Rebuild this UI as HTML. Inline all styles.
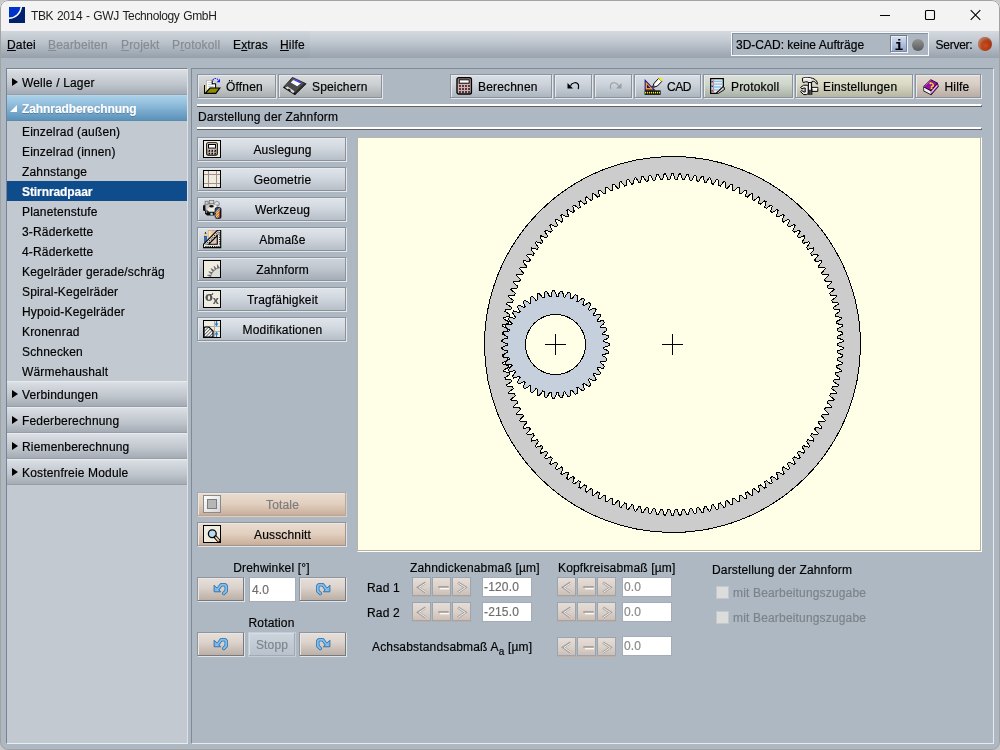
<!DOCTYPE html>
<html lang="de">
<head>
<meta charset="utf-8">
<title>TBK 2014 - GWJ Technology GmbH</title>
<style>
*{box-sizing:border-box;margin:0;padding:0}
html,body{width:1000px;height:750px;overflow:hidden;background:#c9c9c9}
body{font-family:"Liberation Sans",sans-serif;font-size:12px;color:#000;position:relative;line-height:14px;letter-spacing:.17px;-webkit-text-stroke:.18px}
.abs{position:absolute}
#win{position:absolute;left:0;top:0;width:1000px;height:750px;background:#aeb8c3;border-radius:8px;overflow:hidden}
#frame{left:0;top:0;width:1000px;height:750px;border:1px solid #a2a2a2;border-radius:8px;pointer-events:none}
#win>*{position:absolute}
#win{will-change:transform}
#title{left:0;top:0;width:1000px;height:31px;background:#f3f3f3}
#title .t{position:absolute;left:31px;top:9px;font-size:12px;line-height:14px;color:#1c1c1c;letter-spacing:-.37px;word-spacing:.8px;-webkit-text-stroke:0;white-space:nowrap}
#menubar{left:0;top:31px;width:1000px;height:27px;background:linear-gradient(#d5dae0 0%,#c3cad2 35%,#a9b2bc 75%,#99a3ad 100%)}
.mi{position:absolute;top:7px;white-space:nowrap;line-height:14px}
.mi.dis{color:#868b90}
.mi u{text-decoration:underline;text-underline-offset:1px}
/* panels */
#left{left:6px;top:68px;width:182px;height:676px;background:#c2c9d1;border-left:1px solid #79848e;border-top:1px solid #79848e;border-bottom:1px solid #e9edf0;border-right:1px solid #dde2e7}
#right{left:191px;top:68px;width:803px;height:676px;border-left:1px solid #7f8a94;border-top:1px solid #7f8a94;border-bottom:1px solid #e6eaee;border-right:1px solid #e6eaee}
.hdr{position:absolute;left:7px;width:180px;height:26px;background:linear-gradient(#dbe0e5 0,#d3d8de 15%,#bfc5cc 60%,#a5abb4 100%);border-bottom:1px solid #979ea7;border-top:1px solid #e9ecef}
.hdr span{position:absolute;left:15px;top:6px;line-height:14px;white-space:nowrap}
.hdr i{position:absolute;left:5px;top:8px;width:0;height:0;border-left:6px solid #000;border-top:4.5px solid transparent;border-bottom:4.5px solid transparent}
.hdr.open{background:linear-gradient(#a9d0e8 0,#94c0de 30%,#6fa2c7 75%,#5d92b8 100%);border-top:1px solid #b4d6ea;border-bottom:1px solid #5a8cb0}
.hdr.open span{color:#fff;font-weight:bold;letter-spacing:-.09px;text-shadow:0 1px 0 rgba(60,90,120,.5)}
.hdr.open i{border:0;left:3px;top:9px;border-bottom:7px solid #fff;border-left:7px solid transparent}
.it{position:absolute;left:7px;width:180px;height:20px;padding-left:15px;line-height:20px;padding-top:1px;white-space:nowrap}
.it.sel{background:#0f4c8b;color:#fff;font-weight:bold;letter-spacing:-.08px}
/* buttons */
.btn{position:absolute;height:25px;border:1px solid;border-color:#8c959e #e3e7eb #e3e7eb #8c959e;background:linear-gradient(#dfe4e9 0,#d3d9e0 40%,#b4bcc6 100%);box-shadow:inset -1px -1px 0 #8a9199, inset 1px 1px 0 #e8ebee;white-space:nowrap}
.btn .lb{position:absolute;top:5px;line-height:14px}
.btn.grey{background:linear-gradient(#d9dbdd 0,#cdd0d2 40%,#a9acaf 100%)}
.btn.blue{background:linear-gradient(#d9dfe6 0,#ccd3db 40%,#aab3bd 100%)}
.btn.green{background:linear-gradient(#dbe1d8 0,#cfd6cc 40%,#a6aea3 100%)}
.btn.yellow{background:linear-gradient(#e4e4d2 0,#d9d9c5 40%,#b3b39f 100%)}
.btn.pink{background:linear-gradient(#e2dad3 0,#d7cdc5 40%,#b6aaa1 100%)}
.btn.tan{background:linear-gradient(#e9dccf 0,#e2d0c0 45%,#ccb29f 90%,#bda592 100%);border-color:#8c959e #dfe3e8 #dfe3e8 #8c959e;box-shadow:inset -1px -1px 0 #a3958b, inset 1px 1px 0 #f0e8e1}
.btn.tan.dis{border-color:#a1aab3 #d5d0cc #e6ccb6 #a1aab3;box-shadow:inset -1px -1px 0 #b8a89c, inset 1px 1px 0 #eee5dd}
.btn.tan2{height:25px;background:linear-gradient(#e6dfd9 0,#dcd3cc 40%,#b9aca3 100%);border-color:#8e979f #e0e4e8 #e0e4e8 #8e979f;box-shadow:inset -1px -1px 0 #747a80, inset 1px 1px 0 #ebe6e1}
.side{height:25px}
.side .lb{left:21px;right:0;text-align:center}
.btn.cur{background:linear-gradient(#cdd3da 0,#c2c9d1 40%,#a2aab4 100%)}
.ic{position:absolute;left:5px;top:2px;width:18px;height:18px;border:1px solid #000;background:#efece0;overflow:hidden}
.sep{position:absolute;left:197px;width:785px;height:3px;border-top:2px solid #fff;border-bottom:1px solid #5f6368;border-right:1px solid #5f6368}
.inp{position:absolute;height:20px;background:#fff;border:1px solid #a4adb6;color:#6e6e6e;padding-left:1px;line-height:19px;white-space:nowrap}
.sp{position:absolute;width:19px;height:19px;background:linear-gradient(#e6ddd6 0,#dcd2ca 50%,#cdbfb5 100%);border:1px solid #9ba5af}
.sp svg{position:absolute;left:0;top:0}
.lbl{position:absolute;white-space:nowrap;line-height:14px}
.cb{position:absolute;width:13px;height:13px;background:#dcdcdc;border:1px solid #c3c8cd}
.g{color:#7c8288}
</style>
</head>
<body>
<div id="win">
<!-- TITLE -->
<div id="title">
 <svg class="abs" style="left:9px;top:7px" width="16" height="16" viewBox="0 0 16 16"><rect width="16" height="16" fill="#00216f"/><path d="M0 0H12.5A13 13 0 0 1 0 11.5Z" fill="#0033cc"/><path d="M12.3 0A12.6 12.6 0 0 1 0 11.3" fill="none" stroke="#fff" stroke-width="1.500"/></svg>
 <div class="t">TBK 2014 - GWJ Technology GmbH</div>
 <svg class="abs" style="left:870px;top:0px" width="128" height="30" viewBox="0 0 128 30"><g fill="none" stroke="#000" stroke-width="1.100"><path d="M10 15.5H20"/><rect x="55.5" y="10.5" width="9" height="9" rx="1"/><path d="M100.700 10.200L110.300 19.800M110.300 10.200L100.700 19.800"/></g></svg>
</div>
<!-- MENU -->
<div id="menubar">
 <div class="abs" style="left:0;top:0;width:310px;height:27px;background:rgba(20,30,60,.02)"></div>
 <div class="mi" style="left:7px"><u>D</u>atei</div>
 <div class="mi dis" style="left:48px"><u>B</u>earbeiten</div>
 <div class="mi dis" style="left:121px"><u>P</u>rojekt</div>
 <div class="mi dis" style="left:172px">P<u>r</u>otokoll</div>
 <div class="mi" style="left:233px">E<u>x</u>tras</div>
 <div class="mi" style="left:280px"><u>H</u>ilfe</div>
 <div class="abs" style="left:731px;top:1px;width:198px;height:24px;border:1px solid #f7f9fa;background:#adb7c2;box-shadow:inset 1px 1px 0 #8792a0"></div>
 <div class="lbl" style="left:736px;top:7px;letter-spacing:0">3D-CAD: keine Aufträge</div>
 <div class="abs" style="left:890px;top:4px;width:18px;height:18px;border:1px solid;border-color:#6f7a87 #f3f5f8 #f3f5f8 #6f7a87;background:linear-gradient(#d6dff0,#b0c0de 50%,#8fa3c9);box-shadow:inset -1px -1px 0 #7a88a6,inset 1px 1px 0 #e8edf6"><span class="abs" style="left:0;width:16px;text-align:center;top:0;font-family:'Liberation Mono',monospace;font-weight:bold;font-size:14px;line-height:15px;top:3px">i</span></div>
 <div class="abs" style="left:912px;top:8px;width:12px;height:12px;border-radius:50%;background:linear-gradient(#929292,#777 50%,#5a5a5a)"></div>
 <div class="lbl" style="left:935.500px;top:7px;letter-spacing:-.25px">Server:</div>
 <div class="abs" style="left:978px;top:6px;width:14px;height:14px;border-radius:50%;background:radial-gradient(circle at 52% 62%,#cf4c1f 0,#b23c13 38%,#8a2c0d 70%,#74260c 100%);box-shadow:inset 2px 2px 3px rgba(235,190,170,.55)"></div>
</div>
<!-- LEFT PANEL -->
<div id="left"></div>
<div class="hdr" style="top:69px"><i></i><span>Welle / Lager</span></div>
<div class="hdr open" style="top:95px"><i></i><span>Zahnradberechnung</span></div>
<div class="it" style="top:121px">Einzelrad (außen)</div>
<div class="it" style="top:141px">Einzelrad (innen)</div>
<div class="it" style="top:161px">Zahnstange</div>
<div class="it sel" style="top:181px">Stirnradpaar</div>
<div class="it" style="top:201px">Planetenstufe</div>
<div class="it" style="top:221px">3-Räderkette</div>
<div class="it" style="top:241px">4-Räderkette</div>
<div class="it" style="top:261px">Kegelräder gerade/schräg</div>
<div class="it" style="top:281px">Spiral-Kegelräder</div>
<div class="it" style="top:301px">Hypoid-Kegelräder</div>
<div class="it" style="top:321px">Kronenrad</div>
<div class="it" style="top:341px">Schnecken</div>
<div class="it" style="top:361px">Wärmehaushalt</div>
<div class="hdr" style="top:381px"><i></i><span>Verbindungen</span></div>
<div class="hdr" style="top:407px"><i></i><span>Federberechnung</span></div>
<div class="hdr" style="top:433px"><i></i><span>Riemenberechnung</span></div>
<div class="hdr" style="top:459px"><i></i><span>Kostenfreie Module</span></div>
<!-- RIGHT PANEL -->
<div id="right"></div>
<!-- TOOLBAR -->
<div class="btn grey" style="left:197px;top:74px;width:80px">
 <svg class="abs" style="left:6px;top:3px" width="17" height="17" viewBox="0 0 17 17">
  <path d="M2.600 2.400H8.200L11.600 5.800V9.800H6L2.600 13.400Z" fill="#fff" stroke="#8a8a8a" stroke-width=".5"/>
  <path d="M4.200 4.500H7.600M4.200 6.500H9.600M4.200 8.500H9.600" stroke="#c4c4c4" stroke-width=".9"/>
  <path d="M8.200 2.400V5.800H11.600" fill="#fff" stroke="#000" stroke-width="1.100"/><path d="M11.600 5.600V9.800" stroke="#000" stroke-width="1"/>
  <rect x="0" y="7" width="1.200" height="9" fill="#000"/><rect x="1.200" y="7.400" width="1.100" height="7.800" fill="#e6df6a"/>
  <path d="M1.200 15.400L6 10H15.800L11.800 15.400Z" fill="#8f8d00" stroke="#000" stroke-width="1.200" stroke-linejoin="miter"/>
  <path d="M8.800 2.200C9.800 -.2 12.800 -.2 14.200 1.800" fill="none" stroke="#2222e6" stroke-width="1.100" stroke-dasharray="1.500 .9"/>
  <path d="M16 .800V4.200H12.600Z" fill="#1414ff"/>
 </svg>
 <span class="lb" style="left:28px">Öffnen</span>
</div>
<div class="btn grey" style="left:278px;top:74px;width:105px">
 <svg class="abs" style="left:4px;top:2px" width="25" height="19" viewBox="0 0 25 19">
  <path d="M9.400 .400L23.200 6.800L12 17.800L.400 10.400Z" fill="#4b4b4b" stroke="#1c1c1c" stroke-width=".8"/>
  <path d="M23 7L12 17.800L10.400 16.800L21.400 6.200Z" fill="#2a2a2a"/>
  <path d="M.400 10.400L12 17.800L12.600 16.400L1.400 9.400Z" fill="#0c0c0c"/>
  <path d="M11 2.200L18.600 5.800L14.200 9.200L7.800 5.600Z" fill="#fff"/>
  <path d="M11 1.800L18.600 5.400L17.600 6.600L10 3Z" fill="#3c3cff"/>
  <path d="M2 10.400L4.600 9.600L11.400 14.200L10.400 16.200Z" fill="#dedede"/>
  <path d="M5.600 11.600L7.800 13L7 14.400L4.800 13Z" fill="#1a1a1a"/>
  <path d="M9 4.600L12 3.400M10 5.600L13.400 4.200" stroke="#ddd" stroke-width=".4"/>
 </svg>
 <span class="lb" style="left:33px">Speichern</span>
</div>
<div class="btn blue" style="left:450px;top:74px;width:103px">
 <svg class="abs" style="left:5px;top:2px" width="17" height="18" viewBox="0 0 17 18">
  <rect x="1" y=".8" width="14.4" height="16.2" rx="1.8" fill="#d9b0b2" stroke="#000" stroke-width="1.4"/>
  <rect x="3.2" y="2.8" width="10" height="3.4" fill="#fff" stroke="#000" stroke-width="1"/>
  <g fill="#000"><rect x="3.2" y="8.2" width="1.600" height="1.600"/><rect x="6.2" y="8.2" width="1.600" height="1.600"/><rect x="9.2" y="8.2" width="1.600" height="1.600"/><rect x="12.2" y="8.2" width="1.600" height="1.600"/><rect x="3.2" y="11.2" width="1.600" height="1.600"/><rect x="6.2" y="11.2" width="1.600" height="1.600"/><rect x="9.2" y="11.2" width="1.600" height="1.600"/><rect x="12.2" y="11.2" width="1.600" height="1.600"/><rect x="3.2" y="14.2" width="1.600" height="1.600"/><rect x="6.2" y="14.2" width="1.600" height="1.600"/><rect x="9.2" y="14.2" width="1.600" height="1.600"/><rect x="12.2" y="14.2" width="1.600" height="1.600"/></g>
 </svg>
 <span class="lb" style="left:27px">Berechnen</span>
</div>
<div class="btn blue" style="left:554px;top:74px;width:39px">
 <svg class="abs" style="left:11px;top:6px" width="16" height="10" viewBox="0 0 16 10"><path d="M1.5 2V7.5H7Z" fill="#000"/><path d="M4.5 4.8C6 1.2 11.4 .6 12.4 3.8C12.9 5.4 12.4 6.8 12.2 8.2" fill="none" stroke="#000" stroke-width="1.2"/></svg>
</div>
<div class="btn blue" style="left:594px;top:74px;width:39px">
 <svg class="abs" style="left:12px;top:6px" width="16" height="10" viewBox="0 0 16 10"><path d="M14.5 2V7.5H9Z" fill="#9b9da0"/><path d="M11.5 4.8C10 1.2 4.6 .6 3.6 3.8C3.1 5.4 3.6 6.8 3.8 8.2" fill="none" stroke="#9b9da0" stroke-width="1.1"/></svg>
</div>
<div class="btn blue" style="left:634px;top:74px;width:68px">
 <svg class="abs" style="left:9px;top:2px" width="19" height="19" viewBox="0 0 19 19">
  <path d="M.6 2V13.4H11.6Z" fill="#10108c"/><path d="M1.6 4.4V12.4H9.4Z" fill="#ff9a1a"/><path d="M3 7.6V11H6.4Z" fill="#10108c"/>
  <rect x=".6" y="13.4" width="16" height="4.4" fill="#000"/><path d="M1 15.6H16" stroke="#f4ec10" stroke-width="1.6" stroke-dasharray="1.2 .8"/>
  <path d="M8.6 9.8L10.2 6.2L14.6 1.4L18 4.2L13.4 9L9.4 10.4Z" fill="#fff" stroke="#000" stroke-width="1"/>
  <path d="M14.2 1.6L17.8 4.4L18.6 2.2L16.4 .4Z" fill="#f4ec10"/><path d="M8.6 10L10 8.2L11 9.2Z" fill="#000"/>
 </svg>
 <span class="lb" style="left:32px;letter-spacing:-.5px">CAD</span>
</div>
<div class="btn green" style="left:703px;top:74px;width:91px">
 <svg class="abs" style="left:6px;top:3px" width="17" height="17" viewBox="0 0 17 17">
  <path d="M.7 .7H13.3V8.6L6.4 15.3H.7Z" fill="#f1eceb" stroke="#000" stroke-width="1.3"/>
  <path d="M3.400 1.200V14.800" stroke="#f06a6a" stroke-width="1.300"/>
  <path d="M1.2 3.4H12.8M1.2 6.2H12.8M1.2 9H11M1.2 11.8H8.6" stroke="#84c2ee" stroke-width="1.300"/>
  <path d="M13 8.8L14.4 9.6V11.6L8.4 15.4L6.6 15.2Z" fill="#c9c9c9" stroke="#000" stroke-width=".9"/>
  <g fill="#000"><rect x="1.6" y="3" width="1" height="1.4"/><rect x="1.6" y="7.6" width="1" height="1.4"/><rect x="1.6" y="12.2" width="1" height="1.4"/></g>
 </svg>
 <span class="lb" style="left:27px">Protokoll</span>
</div>
<div class="btn yellow" style="left:795px;top:74px;width:119px">
 <svg class="abs" style="left:4px;top:2px" width="19" height="19" viewBox="0 0 19 19">
  <path d="M2.4 1.2C6 .2 12 .2 15.4 2.8C17 4.2 17.6 6 17.4 7.2L16.4 6.8C15.6 4.8 14 4 12 4.4L11.6 5.8H8.2L7.6 4.8C6 4.6 4.4 5 3.2 5.6L2.6 4.2Z" fill="#e6e6e6" stroke="#000" stroke-width="1"/>
  <path d="M3.4 1.8C6 1.2 9 1.4 11 2.2" stroke="#fff" stroke-width="1.2" fill="none"/>
  <rect x="8.4" y="5.6" width="3.2" height="8.2" fill="#d8d8d8" stroke="#000" stroke-width="1"/><path d="M9.6 6V13" stroke="#fff" stroke-width="1"/>
  <rect x="7.8" y="12.8" width="4.6" height="5" fill="#222"/><path d="M8.4 14H12M8.4 16H12" stroke="#aaa" stroke-width=".8" stroke-dasharray=".9 .9"/>
  <path d="M12 10.4H17.8V14.4H12Z" fill="#f0f0f0" stroke="#000" stroke-width="1"/><path d="M12.4 11.4H17.4" stroke="#fff" stroke-width="1"/>
  <path d="M.600 10.400L3.600 8.200L7.400 8.200L8.200 9V16.600L6.400 17.600H3.600L.600 14.600L1.800 13.600L4 15H5.200V11H4L1.800 11.800Z" fill="#ececec" stroke="#000" stroke-width="1"/>
 </svg>
 <span class="lb" style="left:27px">Einstellungen</span>
</div>
<div class="btn pink" style="left:915px;top:74px;width:67px">
 <svg class="abs" style="left:7px;top:4px" width="17" height="17" viewBox="0 0 17 17">
  <path d="M7.8 .3L14.7 3.7L15.8 7.4L8.2 16.2L.5 12.2L.3 7.6Z" fill="#000"/>
  <path d="M.9 8.6L7.8 12.2V15.2L1.2 11.8Z" fill="#f2f2f2"/>
  <path d="M7.8 12.2L14.4 4.6L15.2 7.2L8.3 15.4Z" fill="#a010b0"/><path d="M8.2 12.6L14.2 5.8L14.6 7L8.4 14.2Z" fill="#dcdcdc"/>
  <path d="M7.8 .9L14.1 3.9L7.7 11.3L.9 7.7Z" fill="#9a0fa8"/>
  <path d="M1.6 7.4L7.6 1.4" stroke="#d9a6e0" stroke-width=".9" stroke-dasharray="1 .8"/>
 </svg>
 <span class="abs" style="left:13px;top:6px;font-weight:bold;font-size:9px;line-height:10px;color:#f6ea16;transform:skewY(25deg)">?</span>
 <span class="lb" style="left:28.500px">Hilfe</span>
</div>
<div class="sep" style="top:104px"></div>
<div class="lbl" style="left:198px;top:110px">Darstellung der Zahnform</div>
<div class="sep" style="top:127px"></div>

<!-- SIDE BUTTONS -->
<div class="btn side" style="left:197px;top:137px;width:150px"><div class="ic">
 <svg width="16" height="16" viewBox="0 0 16 16"><rect x="2.700" y="1.700" width="10.600" height="12.600" rx="1.500" fill="#cfbfb1" stroke="#000" stroke-width="1.100"/><rect x="3.500" y="2.500" width="9" height="5.500" fill="#e6ded6"/><rect x="4.500" y="3.500" width="7" height="3.600" fill="#fff" stroke="#000" stroke-width="1"/><g fill="#000"><rect x="4.3" y="8.9" width="1.800" height="1.800"/><rect x="7.2" y="8.9" width="1.800" height="1.800"/><rect x="10.1" y="8.9" width="1.800" height="1.800"/><rect x="4.3" y="11.7" width="1.800" height="1.800"/><rect x="7.2" y="11.7" width="1.800" height="1.800"/><rect x="10.1" y="11.7" width="1.800" height="1.800"/></g><rect x="4.3" y="8.9" width=".7" height=".7" fill="#fff"/><rect x="7.2" y="8.9" width=".7" height=".7" fill="#fff"/><rect x="10.1" y="8.9" width=".7" height=".7" fill="#fff"/><rect x="4.3" y="11.7" width=".7" height=".7" fill="#fff"/><rect x="7.2" y="11.7" width=".7" height=".7" fill="#fff"/><rect x="10.1" y="11.7" width=".7" height=".7" fill="#fff"/></svg>
</div><span class="lb">Auslegung</span></div>
<div class="btn side" style="left:197px;top:167px;width:150px"><div class="ic">
 <svg width="16" height="16" viewBox="0 0 16 16"><path d="M4.5 0V16M12.5 0V16M0 3.5H16M0 12.5H16" stroke="#a58e92" stroke-width="1"/></svg>
</div><span class="lb">Geometrie</span></div>
<div class="btn side" style="left:197px;top:197px;width:150px">
 <svg class="abs" style="left:5px;top:2px" width="19" height="19" viewBox="0 0 19 19">
  <path d="M.500 5.400L3 3.200H12L15.400 6L9 10.400H3Z" fill="#c6c6c6" stroke="#777" stroke-width=".6"/>
  <rect x="2.100" y="1.200" width="3" height="3" fill="#d2d2d2" stroke="#666" stroke-width=".7"/>
  <rect x="6.300" y=".3" width="4.500" height="3.500" fill="#d6d6d6" stroke="#666" stroke-width=".7"/>
  <path d="M11 3.600L13.600 1L16.200 2.600V5.200H12Z" fill="#d6e2e8" stroke="#667" stroke-width=".7"/>
  <path d="M0 5.500L2.400 5V11.200L0 10.500Z" fill="#111"/>
  <path d="M2 10.600L11.600 11.400V15.600H4L2 13.600Z" fill="#0c0c0c"/>
  <path d="M3.400 10.200L9 4.600L13.200 5L14.200 8.400L10 12.200H6Z" fill="#f0ebdf"/>
  <path d="M3.600 10.200L6 12.200H10" fill="none" stroke="#222" stroke-width=".9"/>
  <ellipse cx="8.500" cy="6.300" rx="2.300" ry="1.200" fill="#111"/>
  <rect x="7.500" y="13" width="2.200" height="2" fill="#a8dcec"/><rect x="2.800" y="11.400" width="1.300" height="1.300" fill="#b9c6ee"/>
  <rect x="12.200" y="7.600" width="5.800" height="10.800" rx="1.500" fill="#1d49b2" stroke="#0a0a0a" stroke-width=".8"/>
  <path d="M12.600 12.800L16.600 8.400M12.600 16L17 11.400M13.800 18L17 14.800" stroke="#f2a21c" stroke-width="1.300"/><path d="M12.600 14.400L16.800 10M12.600 17.400L17 13" stroke="#f6f0d8" stroke-width=".8"/>
  <path d="M17.400 10V18" stroke="#111" stroke-width="1.200"/><path d="M16.600 12V17.600" stroke="#d02a10" stroke-width=".9"/>
 </svg><span class="lb">Werkzeug</span></div>
<div class="btn side" style="left:197px;top:227px;width:150px">
 <svg class="abs" style="left:5px;top:2px" width="19" height="19" viewBox="0 0 19 19">
  <rect x="5.200" y=".4" width="7.800" height="13.800" fill="#fbf3e2" stroke="#cf9d9d" stroke-width=".9"/>
  <path d="M8.200 2H12.200M8.200 4H12.200M8.200 6H12.200M8.200 8H12.200M8.200 10H12.200M8.200 12H12.200" stroke="#b46a44" stroke-width=".7"/>
  <path d="M7.200 .8V14" stroke="#f8d84e" stroke-width="1.100"/>
  <rect x="1.500" y="6" width="2" height="6.400" fill="#1a6ad2" stroke="#0e2a50" stroke-width=".5"/><rect x="1.500" y="3.800" width="2" height="2.200" fill="#f4d262"/><path d="M1.500 3.800L2.500 1.400L3.500 3.800Z" fill="#222"/>
  <path fill-rule="evenodd" d="M.4 14.300L14.400 .3H17.700V17.600H.4ZM5.800 14.200H14.300V5.700Z" fill="#e7e7df" stroke="#000" stroke-width="1.100" stroke-linejoin="miter"/>
  <g fill="#000"><rect x="2.4" y="16" width="1" height="1.500"/><rect x="4.6" y="16" width="1" height="1.500"/><rect x="6.8" y="16" width="1" height="1.500"/><rect x="9.0" y="16" width="1" height="1.500"/><rect x="11.2" y="16" width="1" height="1.500"/><rect x="13.4" y="16" width="1" height="1.500"/><rect x="15.4" y="16" width="1" height="1.500"/><rect x="16.200" y="2.4" width="1.500" height="1"/><rect x="16.200" y="4.6" width="1.500" height="1"/><rect x="16.200" y="6.8" width="1.500" height="1"/><rect x="16.200" y="9.0" width="1.500" height="1"/><rect x="16.200" y="11.2" width="1.500" height="1"/><rect x="16.200" y="13.4" width="1.500" height="1"/><rect x="2.6" y="13.6" width="1" height="1"/><rect x="4.3" y="11.9" width="1" height="1"/><rect x="6.0" y="10.2" width="1" height="1"/><rect x="7.7" y="8.5" width="1" height="1"/><rect x="9.4" y="6.8" width="1" height="1"/><rect x="11.1" y="5.1" width="1" height="1"/><rect x="12.8" y="3.4" width="1" height="1"/><rect x="14.5" y="1.7" width="1" height="1"/><rect x="4.4" y="13.8" width="1" height="1"/><rect x="6.1" y="12.1" width="1" height="1"/><rect x="7.8" y="10.4" width="1" height="1"/><rect x="9.5" y="8.7" width="1" height="1"/><rect x="11.2" y="7.0" width="1" height="1"/><rect x="12.9" y="5.3" width="1" height="1"/><rect x="14.6" y="3.6" width="1" height="1"/></g>
 </svg><span class="lb">Abmaße</span></div>
<div class="btn side cur" style="left:197px;top:257px;width:150px"><div class="ic">
 <svg width="16" height="16" viewBox="0 0 16 16"><path d="M16 16L6.4 19.0 L2.9 18.3 L2.9 17.5 L6.3 16.7 L6.4 16.0 L3.2 14.5 L3.4 13.7 L6.9 13.8 L7.2 13.2 L4.5 10.9 L4.9 10.2 L8.2 11.2 L8.6 10.7 L6.6 7.8 L7.2 7.2 L10.2 9.0 L10.7 8.6 L9.5 5.3 L10.2 4.9 L12.6 7.4 L13.2 7.2 L12.9 3.6 L13.7 3.4 L15.4 6.5 L16.0 6.4 L16.7 2.9 L17.5 2.9 L18.3 6.3 L19.0 6.4 L20.5 3.2 L21.3 3.4 L21.2 6.9 L16 16Z" fill="#6f6f6f"/><circle cx="17.500" cy="17.500" r="10.600" fill="#dcdcd8"/></svg>
</div><span class="lb">Zahnform</span></div>
<div class="btn side" style="left:197px;top:287px;width:150px"><div class="ic">
 <span class="abs" style="left:1px;top:-2px;font-family:'Liberation Serif',serif;font-size:15px;line-height:15px;color:#555;font-weight:bold">σ</span><span class="abs" style="left:9px;top:5px;font-family:'Liberation Sans',sans-serif;font-size:10px;line-height:10px;color:#555;font-weight:bold">x</span>
</div><span class="lb">Tragfähigkeit</span></div>
<div class="btn side" style="left:197px;top:317px;width:150px"><div class="ic">
 <svg width="16" height="16" viewBox="0 0 16 16"><defs><pattern id="hat" width="2.4" height="2.4" patternUnits="userSpaceOnUse" patternTransform="rotate(45)"><rect width="2.4" height="2.4" fill="#eee"/><path d="M0 0V2.4" stroke="#333" stroke-width="1.2"/></pattern></defs>
 <path d="M0 5.5H16M0 10.5H16" stroke="#b7aea6" stroke-width="1"/><path d="M10.5 0V16" stroke="#b7aea6" stroke-width="1"/>
 <path d="M0 16V7.6C0 6.6 .8 6 1.8 6H5L9 10V16Z" fill="url(#hat)" stroke="#000" stroke-width="1.2"/>
 <path d="M12.5 0V4M12.5 16V12" stroke="#1f7fd6" stroke-width="1.2"/><path d="M10.6 2.6H14.4L12.5 5.4ZM10.6 13.4H14.4L12.5 10.6Z" fill="#1f7fd6"/></svg>
</div><span class="lb">Modifikationen</span></div>
<!-- Totale / Ausschnitt -->
<div class="btn side tan dis" style="left:197px;top:492px;width:150px"><div class="ic" style="border-color:#8a8a8a;background:linear-gradient(135deg,#ffffff,#d6d6d6)"><div class="abs" style="left:3px;top:3px;width:10px;height:10px;background:#b6b6b6;border:1px solid #7c7c7c"></div></div><span class="lb" style="color:#7d7d7d">Totale</span></div>
<div class="btn side tan" style="left:197px;top:522px;width:150px"><div class="ic">
 <svg width="16" height="16" viewBox="0 0 16 16"><circle cx="8.300" cy="7.800" r="3.900" fill="#b9dcf4" stroke="#000" stroke-width="1.300"/><path d="M11.400 11L14.800 14.800" stroke="#000" stroke-width="3.400" stroke-linecap="round"/><path d="M11.800 11.400L14.600 14.600" stroke="#f0c090" stroke-width="1.700" stroke-linecap="round"/><path d="M12.200 12.600L13.200 11.800M13.400 13.800L14.400 13" stroke="#fff" stroke-width=".6"/></svg>
</div><span class="lb">Ausschnitt</span></div>
<!-- CANVAS -->
<div class="abs" style="left:357px;top:137px;width:625px;height:415px;background:#ffffe7;border-top:1px solid #b4b6ae;border-left:1px solid #b4b6ae;border-right:1px solid #fff;border-bottom:1px solid #fff;box-shadow:inset -1px -1px 0 #b5b19a"></div>
<svg class="abs" style="left:358px;top:138px" width="623" height="413" viewBox="0 0 623 413" shape-rendering="crispEdges">
 <path fill="#cccccc" fill-rule="evenodd" stroke="#000" stroke-width="1" d="M502.500 206.500A188 188 0 1 0 126.500 206.500A188 188 0 1 0 502.500 206.500Z M149.10 205.49 L148.22 205.19 L147.34 204.88 L146.46 204.56 L145.58 204.21 L144.70 203.85 L143.83 203.48 L143.86 201.97 L144.75 201.63 L145.65 201.31 L146.54 201.01 L147.43 200.72 L148.33 200.45 L149.22 200.19 L149.31 198.17 L148.44 197.84 L147.58 197.49 L146.71 197.13 L145.85 196.74 L144.99 196.35 L144.13 195.93 L144.23 194.42 L145.13 194.13 L146.04 193.85 L146.95 193.58 L147.85 193.34 L148.76 193.10 L149.66 192.89 L149.84 190.87 L148.99 190.50 L148.14 190.12 L147.29 189.71 L146.45 189.29 L145.60 188.86 L144.76 188.41 L144.93 186.90 L145.85 186.65 L146.77 186.41 L147.68 186.19 L148.60 185.98 L149.51 185.79 L150.42 185.61 L150.69 183.61 L149.86 183.20 L149.03 182.77 L148.20 182.33 L147.37 181.88 L146.55 181.40 L145.73 180.92 L145.96 179.42 L146.89 179.21 L147.82 179.01 L148.74 178.83 L149.67 178.66 L150.59 178.51 L151.51 178.37 L151.87 176.38 L151.05 175.94 L150.24 175.48 L149.43 175.00 L148.62 174.51 L147.82 174.00 L147.02 173.48 L147.32 171.99 L148.26 171.82 L149.20 171.66 L150.13 171.52 L151.06 171.40 L151.99 171.29 L152.91 171.19 L153.36 169.22 L152.56 168.74 L151.77 168.24 L150.98 167.73 L150.20 167.20 L149.42 166.66 L148.65 166.10 L149.01 164.63 L149.96 164.50 L150.90 164.39 L151.84 164.29 L152.77 164.20 L153.70 164.13 L154.63 164.08 L155.16 162.13 L154.39 161.61 L153.62 161.08 L152.86 160.53 L152.10 159.97 L151.35 159.40 L150.60 158.80 L151.03 157.35 L151.98 157.27 L152.92 157.19 L153.86 157.13 L154.80 157.09 L155.74 157.06 L156.67 157.05 L157.28 155.12 L156.53 154.57 L155.79 154.01 L155.05 153.43 L154.32 152.83 L153.59 152.22 L152.87 151.60 L153.36 150.17 L154.31 150.12 L155.26 150.09 L156.21 150.08 L157.14 150.07 L158.08 150.09 L159.01 150.12 L159.71 148.22 L158.98 147.64 L158.27 147.04 L157.55 146.43 L156.85 145.80 L156.15 145.16 L155.46 144.51 L156.01 143.10 L156.96 143.09 L157.91 143.10 L158.86 143.13 L159.79 143.17 L160.73 143.22 L161.65 143.29 L162.44 141.43 L161.74 140.82 L161.05 140.19 L160.36 139.54 L159.69 138.89 L159.02 138.22 L158.35 137.53 L158.97 136.15 L159.92 136.19 L160.87 136.24 L161.81 136.31 L162.75 136.39 L163.68 136.48 L164.60 136.59 L165.47 134.77 L164.79 134.12 L164.13 133.47 L163.48 132.79 L162.83 132.11 L162.19 131.41 L161.56 130.69 L162.23 129.34 L163.18 129.42 L164.13 129.51 L165.07 129.62 L166.00 129.74 L166.92 129.88 L167.84 130.03 L168.78 128.24 L168.14 127.57 L167.51 126.89 L166.88 126.18 L166.27 125.47 L165.66 124.74 L165.06 124.00 L165.80 122.68 L166.74 122.80 L167.68 122.94 L168.61 123.09 L169.54 123.25 L170.45 123.43 L171.36 123.62 L172.39 121.87 L171.78 121.18 L171.18 120.46 L170.58 119.73 L170.00 118.99 L169.42 118.24 L168.86 117.47 L169.65 116.18 L170.59 116.35 L171.52 116.52 L172.45 116.71 L173.36 116.92 L174.27 117.14 L175.17 117.37 L176.27 115.67 L175.69 114.95 L175.12 114.21 L174.56 113.45 L174.01 112.69 L173.47 111.91 L172.94 111.12 L173.79 109.87 L174.72 110.07 L175.64 110.29 L176.56 110.52 L177.46 110.76 L178.36 111.02 L179.25 111.29 L180.42 109.65 L179.88 108.90 L179.34 108.13 L178.81 107.35 L178.30 106.56 L177.79 105.76 L177.29 104.95 L178.20 103.74 L179.12 103.98 L180.03 104.24 L180.94 104.51 L181.83 104.80 L182.72 105.09 L183.59 105.40 L184.84 103.81 L184.33 103.04 L183.82 102.25 L183.33 101.45 L182.85 100.64 L182.38 99.81 L181.92 98.98 L182.88 97.81 L183.79 98.09 L184.69 98.39 L185.58 98.70 L186.46 99.03 L187.33 99.36 L188.19 99.71 L189.51 98.18 L189.03 97.38 L188.56 96.57 L188.11 95.75 L187.66 94.92 L187.23 94.07 L186.81 93.22 L187.81 92.09 L188.71 92.42 L189.60 92.76 L190.47 93.11 L191.34 93.47 L192.20 93.84 L193.04 94.23 L194.42 92.75 L193.98 91.94 L193.55 91.11 L193.13 90.27 L192.72 89.42 L192.33 88.55 L191.94 87.68 L193.00 86.60 L193.88 86.97 L194.75 87.34 L195.61 87.73 L196.46 88.13 L197.30 88.54 L198.12 88.97 L199.57 87.55 L199.16 86.72 L198.77 85.87 L198.39 85.01 L198.02 84.14 L197.66 83.26 L197.32 82.38 L198.42 81.34 L199.29 81.75 L200.14 82.16 L200.98 82.59 L201.81 83.03 L202.63 83.47 L203.44 83.94 L204.94 82.59 L204.58 81.73 L204.22 80.87 L203.88 80.00 L203.55 79.11 L203.23 78.22 L202.92 77.31 L204.07 76.33 L204.92 76.77 L205.75 77.23 L206.57 77.69 L207.38 78.16 L208.18 78.65 L208.97 79.14 L210.53 77.86 L210.20 76.99 L209.89 76.11 L209.58 75.23 L209.29 74.33 L209.01 73.42 L208.75 72.51 L209.94 71.57 L210.76 72.05 L211.57 72.54 L212.38 73.04 L213.17 73.55 L213.94 74.07 L214.70 74.60 L216.33 73.39 L216.03 72.51 L215.76 71.61 L215.49 70.71 L215.24 69.80 L215.00 68.89 L214.78 67.96 L216.01 67.08 L216.81 67.60 L217.60 68.12 L218.38 68.65 L219.15 69.20 L219.90 69.75 L220.64 70.31 L222.31 69.18 L222.06 68.28 L221.82 67.38 L221.59 66.47 L221.38 65.55 L221.19 64.62 L221.00 63.68 L222.27 62.86 L223.05 63.41 L223.82 63.97 L224.57 64.54 L225.31 65.11 L226.04 65.70 L226.75 66.30 L228.47 65.23 L228.26 64.33 L228.06 63.42 L227.88 62.49 L227.71 61.57 L227.55 60.63 L227.41 59.69 L228.71 58.92 L229.47 59.51 L230.21 60.10 L230.94 60.70 L231.65 61.31 L232.35 61.92 L233.04 62.55 L234.81 61.56 L234.63 60.65 L234.48 59.73 L234.33 58.80 L234.21 57.87 L234.09 56.93 L233.99 55.98 L235.33 55.27 L236.05 55.89 L236.77 56.51 L237.47 57.14 L238.16 57.78 L238.83 58.43 L239.49 59.09 L241.30 58.18 L241.16 57.26 L241.05 56.34 L240.95 55.40 L240.86 54.46 L240.79 53.52 L240.73 52.56 L242.09 51.92 L242.79 52.57 L243.48 53.22 L244.15 53.88 L244.81 54.55 L245.45 55.23 L246.08 55.91 L247.93 55.09 L247.84 54.16 L247.76 53.23 L247.70 52.30 L247.66 51.35 L247.62 50.41 L247.61 49.45 L249.00 48.87 L249.67 49.54 L250.33 50.23 L250.97 50.92 L251.60 51.62 L252.21 52.32 L252.81 53.04 L254.69 52.29 L254.64 51.36 L254.61 50.43 L254.59 49.49 L254.58 48.55 L254.59 47.60 L254.62 46.65 L256.04 46.12 L256.68 46.83 L257.30 47.54 L257.92 48.26 L258.51 48.99 L259.09 49.72 L259.66 50.46 L261.57 49.80 L261.56 48.87 L261.57 47.93 L261.59 47.00 L261.63 46.05 L261.68 45.11 L261.75 44.15 L263.19 43.69 L263.80 44.43 L264.39 45.17 L264.97 45.91 L265.53 46.67 L266.08 47.42 L266.61 48.18 L268.55 47.61 L268.59 46.68 L268.63 45.75 L268.70 44.81 L268.78 43.87 L268.87 42.93 L268.98 41.98 L270.44 41.58 L271.02 42.34 L271.58 43.11 L272.12 43.88 L272.65 44.66 L273.17 45.44 L273.66 46.22 L275.63 45.73 L275.70 44.81 L275.79 43.88 L275.89 42.94 L276.02 42.01 L276.15 41.07 L276.30 40.13 L277.78 39.80 L278.32 40.58 L278.85 41.37 L279.36 42.17 L279.85 42.96 L280.33 43.77 L280.79 44.57 L282.78 44.17 L282.89 43.25 L283.02 42.32 L283.17 41.40 L283.33 40.47 L283.51 39.54 L283.70 38.60 L285.19 38.34 L285.69 39.14 L286.18 39.96 L286.66 40.77 L287.12 41.59 L287.56 42.41 L287.99 43.24 L289.99 42.93 L290.14 42.01 L290.31 41.09 L290.50 40.17 L290.70 39.25 L290.92 38.33 L291.16 37.40 L292.66 37.20 L293.13 38.03 L293.58 38.87 L294.02 39.70 L294.44 40.54 L294.85 41.38 L295.24 42.23 L297.25 42.00 L297.44 41.09 L297.65 40.18 L297.88 39.27 L298.13 38.36 L298.39 37.45 L298.66 36.54 L300.17 36.40 L300.60 37.25 L301.01 38.11 L301.42 38.96 L301.80 39.82 L302.17 40.67 L302.52 41.53 L304.54 41.40 L304.77 40.50 L305.03 39.60 L305.29 38.70 L305.58 37.80 L305.88 36.90 L306.19 36.00 L307.70 35.94 L308.10 36.80 L308.48 37.67 L308.84 38.55 L309.19 39.42 L309.52 40.29 L309.83 41.17 L311.85 41.12 L312.13 40.23 L312.42 39.35 L312.73 38.46 L313.05 37.57 L313.39 36.69 L313.74 35.80 L315.26 35.80 L315.61 36.69 L315.95 37.57 L316.27 38.46 L316.58 39.35 L316.87 40.23 L317.15 41.12 L319.17 41.17 L319.48 40.29 L319.81 39.42 L320.16 38.55 L320.52 37.67 L320.90 36.80 L321.30 35.94 L322.81 36.00 L323.12 36.90 L323.42 37.80 L323.71 38.70 L323.97 39.60 L324.23 40.50 L324.46 41.40 L326.48 41.53 L326.83 40.67 L327.20 39.82 L327.58 38.96 L327.99 38.11 L328.40 37.25 L328.83 36.40 L330.34 36.54 L330.61 37.45 L330.87 38.36 L331.12 39.27 L331.35 40.18 L331.56 41.09 L331.75 42.00 L333.76 42.23 L334.15 41.38 L334.56 40.54 L334.98 39.70 L335.42 38.87 L335.87 38.03 L336.34 37.20 L337.84 37.40 L338.08 38.33 L338.30 39.25 L338.50 40.17 L338.69 41.09 L338.86 42.01 L339.01 42.93 L341.01 43.24 L341.44 42.41 L341.88 41.59 L342.34 40.77 L342.82 39.96 L343.31 39.14 L343.81 38.34 L345.30 38.60 L345.49 39.54 L345.67 40.47 L345.83 41.40 L345.98 42.32 L346.11 43.25 L346.22 44.17 L348.21 44.57 L348.67 43.77 L349.15 42.96 L349.64 42.17 L350.15 41.37 L350.68 40.58 L351.22 39.80 L352.70 40.13 L352.85 41.07 L352.98 42.01 L353.11 42.94 L353.21 43.88 L353.30 44.81 L353.37 45.73 L355.34 46.22 L355.83 45.44 L356.35 44.66 L356.88 43.88 L357.42 43.11 L357.98 42.34 L358.56 41.58 L360.02 41.98 L360.13 42.93 L360.22 43.87 L360.30 44.81 L360.37 45.75 L360.41 46.68 L360.45 47.61 L362.39 48.18 L362.92 47.42 L363.47 46.67 L364.03 45.91 L364.61 45.17 L365.20 44.43 L365.81 43.69 L367.25 44.15 L367.32 45.11 L367.37 46.05 L367.41 47.00 L367.43 47.93 L367.44 48.87 L367.43 49.80 L369.34 50.46 L369.91 49.72 L370.49 48.99 L371.08 48.26 L371.70 47.54 L372.32 46.83 L372.96 46.12 L374.38 46.65 L374.41 47.60 L374.42 48.55 L374.41 49.49 L374.39 50.43 L374.36 51.36 L374.31 52.29 L376.19 53.04 L376.79 52.32 L377.40 51.62 L378.03 50.92 L378.67 50.23 L379.33 49.54 L380.00 48.87 L381.39 49.45 L381.38 50.41 L381.34 51.35 L381.30 52.30 L381.24 53.23 L381.16 54.16 L381.07 55.09 L382.92 55.91 L383.55 55.23 L384.19 54.55 L384.85 53.88 L385.52 53.22 L386.21 52.57 L386.91 51.92 L388.27 52.56 L388.21 53.52 L388.14 54.46 L388.05 55.40 L387.95 56.34 L387.84 57.26 L387.70 58.18 L389.51 59.09 L390.17 58.43 L390.84 57.78 L391.53 57.14 L392.23 56.51 L392.95 55.89 L393.67 55.27 L395.01 55.98 L394.91 56.93 L394.79 57.87 L394.67 58.80 L394.52 59.73 L394.37 60.65 L394.19 61.56 L395.96 62.55 L396.65 61.92 L397.35 61.31 L398.06 60.70 L398.79 60.10 L399.53 59.51 L400.29 58.92 L401.59 59.69 L401.45 60.63 L401.29 61.57 L401.12 62.49 L400.94 63.42 L400.74 64.33 L400.53 65.23 L402.25 66.30 L402.96 65.70 L403.69 65.11 L404.43 64.54 L405.18 63.97 L405.95 63.41 L406.73 62.86 L408.00 63.68 L407.81 64.62 L407.62 65.55 L407.41 66.47 L407.18 67.38 L406.94 68.28 L406.69 69.18 L408.36 70.31 L409.10 69.75 L409.85 69.20 L410.62 68.65 L411.40 68.12 L412.19 67.60 L412.99 67.08 L414.22 67.96 L414.00 68.89 L413.76 69.80 L413.51 70.71 L413.24 71.61 L412.97 72.51 L412.67 73.39 L414.30 74.60 L415.06 74.07 L415.83 73.55 L416.62 73.04 L417.43 72.54 L418.24 72.05 L419.06 71.57 L420.25 72.51 L419.99 73.42 L419.71 74.33 L419.42 75.23 L419.11 76.11 L418.80 76.99 L418.47 77.86 L420.03 79.14 L420.82 78.65 L421.62 78.16 L422.43 77.69 L423.25 77.23 L424.08 76.77 L424.93 76.33 L426.08 77.31 L425.77 78.22 L425.45 79.11 L425.12 80.00 L424.78 80.87 L424.42 81.73 L424.06 82.59 L425.56 83.94 L426.37 83.47 L427.19 83.03 L428.02 82.59 L428.86 82.16 L429.71 81.75 L430.58 81.34 L431.68 82.38 L431.34 83.26 L430.98 84.14 L430.61 85.01 L430.23 85.87 L429.84 86.72 L429.43 87.55 L430.88 88.97 L431.70 88.54 L432.54 88.13 L433.39 87.73 L434.25 87.34 L435.12 86.97 L436.00 86.60 L437.06 87.68 L436.67 88.55 L436.28 89.42 L435.87 90.27 L435.45 91.11 L435.02 91.94 L434.58 92.75 L435.96 94.23 L436.80 93.84 L437.66 93.47 L438.53 93.11 L439.40 92.76 L440.29 92.42 L441.19 92.09 L442.19 93.22 L441.77 94.07 L441.34 94.92 L440.89 95.75 L440.44 96.57 L439.97 97.38 L439.49 98.18 L440.81 99.71 L441.67 99.36 L442.54 99.03 L443.42 98.70 L444.31 98.39 L445.21 98.09 L446.12 97.81 L447.08 98.98 L446.62 99.81 L446.15 100.64 L445.67 101.45 L445.18 102.25 L444.67 103.04 L444.16 103.81 L445.41 105.40 L446.28 105.09 L447.17 104.80 L448.06 104.51 L448.97 104.24 L449.88 103.98 L450.80 103.74 L451.71 104.95 L451.21 105.76 L450.70 106.56 L450.19 107.35 L449.66 108.13 L449.12 108.90 L448.58 109.65 L449.75 111.29 L450.64 111.02 L451.54 110.76 L452.44 110.52 L453.36 110.29 L454.28 110.07 L455.21 109.87 L456.06 111.12 L455.53 111.91 L454.99 112.69 L454.44 113.45 L453.88 114.21 L453.31 114.95 L452.73 115.67 L453.83 117.37 L454.73 117.14 L455.64 116.92 L456.55 116.71 L457.48 116.52 L458.41 116.35 L459.35 116.18 L460.14 117.47 L459.58 118.24 L459.00 118.99 L458.42 119.73 L457.82 120.46 L457.22 121.18 L456.61 121.87 L457.64 123.62 L458.55 123.43 L459.46 123.25 L460.39 123.09 L461.32 122.94 L462.26 122.80 L463.20 122.68 L463.94 124.00 L463.34 124.74 L462.73 125.47 L462.12 126.18 L461.49 126.89 L460.86 127.57 L460.22 128.24 L461.16 130.03 L462.08 129.88 L463.00 129.74 L463.93 129.62 L464.87 129.51 L465.82 129.42 L466.77 129.34 L467.44 130.69 L466.81 131.41 L466.17 132.11 L465.52 132.79 L464.87 133.47 L464.21 134.12 L463.53 134.77 L464.40 136.59 L465.32 136.48 L466.25 136.39 L467.19 136.31 L468.13 136.24 L469.08 136.19 L470.03 136.15 L470.65 137.53 L469.98 138.22 L469.31 138.89 L468.64 139.54 L467.95 140.19 L467.26 140.82 L466.56 141.43 L467.35 143.29 L468.27 143.22 L469.21 143.17 L470.14 143.13 L471.09 143.10 L472.04 143.09 L472.99 143.10 L473.54 144.51 L472.85 145.16 L472.15 145.80 L471.45 146.43 L470.73 147.04 L470.02 147.64 L469.29 148.22 L469.99 150.12 L470.92 150.09 L471.86 150.07 L472.79 150.08 L473.74 150.09 L474.69 150.12 L475.64 150.17 L476.13 151.60 L475.41 152.22 L474.68 152.83 L473.95 153.43 L473.21 154.01 L472.47 154.57 L471.72 155.12 L472.33 157.05 L473.26 157.06 L474.20 157.09 L475.14 157.13 L476.08 157.19 L477.02 157.27 L477.97 157.35 L478.40 158.80 L477.65 159.40 L476.90 159.97 L476.14 160.53 L475.38 161.08 L474.61 161.61 L473.84 162.13 L474.37 164.08 L475.30 164.13 L476.23 164.20 L477.16 164.29 L478.10 164.39 L479.04 164.50 L479.99 164.63 L480.35 166.10 L479.58 166.66 L478.80 167.20 L478.02 167.73 L477.23 168.24 L476.44 168.74 L475.64 169.22 L476.09 171.19 L477.01 171.29 L477.94 171.40 L478.87 171.52 L479.80 171.66 L480.74 171.82 L481.68 171.99 L481.98 173.48 L481.18 174.00 L480.38 174.51 L479.57 175.00 L478.76 175.48 L477.95 175.94 L477.13 176.38 L477.49 178.37 L478.41 178.51 L479.33 178.66 L480.26 178.83 L481.18 179.01 L482.11 179.21 L483.04 179.42 L483.27 180.92 L482.45 181.40 L481.63 181.88 L480.80 182.33 L479.97 182.77 L479.14 183.20 L478.31 183.61 L478.58 185.61 L479.49 185.79 L480.40 185.98 L481.32 186.19 L482.23 186.41 L483.15 186.65 L484.07 186.90 L484.24 188.41 L483.40 188.86 L482.55 189.29 L481.71 189.71 L480.86 190.12 L480.01 190.50 L479.16 190.87 L479.34 192.89 L480.24 193.10 L481.15 193.34 L482.05 193.58 L482.96 193.85 L483.87 194.13 L484.77 194.42 L484.87 195.93 L484.01 196.35 L483.15 196.74 L482.29 197.13 L481.42 197.49 L480.56 197.84 L479.69 198.17 L479.78 200.19 L480.67 200.45 L481.57 200.72 L482.46 201.01 L483.35 201.31 L484.25 201.63 L485.14 201.97 L485.17 203.48 L484.30 203.85 L483.42 204.21 L482.54 204.56 L481.66 204.88 L480.78 205.19 L479.90 205.49 L479.90 207.51 L480.78 207.81 L481.66 208.12 L482.54 208.44 L483.42 208.79 L484.30 209.15 L485.17 209.52 L485.14 211.03 L484.25 211.37 L483.35 211.69 L482.46 211.99 L481.57 212.28 L480.67 212.55 L479.78 212.81 L479.69 214.83 L480.56 215.16 L481.42 215.51 L482.29 215.87 L483.15 216.26 L484.01 216.65 L484.87 217.07 L484.77 218.58 L483.87 218.87 L482.96 219.15 L482.05 219.42 L481.15 219.66 L480.24 219.90 L479.34 220.11 L479.16 222.13 L480.01 222.50 L480.86 222.88 L481.71 223.29 L482.55 223.71 L483.40 224.14 L484.24 224.59 L484.07 226.10 L483.15 226.35 L482.23 226.59 L481.32 226.81 L480.40 227.02 L479.49 227.21 L478.58 227.39 L478.31 229.39 L479.14 229.80 L479.97 230.23 L480.80 230.67 L481.63 231.12 L482.45 231.60 L483.27 232.08 L483.04 233.58 L482.11 233.79 L481.18 233.99 L480.26 234.17 L479.33 234.34 L478.41 234.49 L477.49 234.63 L477.13 236.62 L477.95 237.06 L478.76 237.52 L479.57 238.00 L480.38 238.49 L481.18 239.00 L481.98 239.52 L481.68 241.01 L480.74 241.18 L479.80 241.34 L478.87 241.48 L477.94 241.60 L477.01 241.71 L476.09 241.81 L475.64 243.78 L476.44 244.26 L477.23 244.76 L478.02 245.27 L478.80 245.80 L479.58 246.34 L480.35 246.90 L479.99 248.37 L479.04 248.50 L478.10 248.61 L477.16 248.71 L476.23 248.80 L475.30 248.87 L474.37 248.92 L473.84 250.87 L474.61 251.39 L475.38 251.92 L476.14 252.47 L476.90 253.03 L477.65 253.60 L478.40 254.20 L477.97 255.65 L477.02 255.73 L476.08 255.81 L475.14 255.87 L474.20 255.91 L473.26 255.94 L472.33 255.95 L471.72 257.88 L472.47 258.43 L473.21 258.99 L473.95 259.57 L474.68 260.17 L475.41 260.78 L476.13 261.40 L475.64 262.83 L474.69 262.88 L473.74 262.91 L472.79 262.92 L471.86 262.93 L470.92 262.91 L469.99 262.88 L469.29 264.78 L470.02 265.36 L470.73 265.96 L471.45 266.57 L472.15 267.20 L472.85 267.84 L473.54 268.49 L472.99 269.90 L472.04 269.91 L471.09 269.90 L470.14 269.87 L469.21 269.83 L468.27 269.78 L467.35 269.71 L466.56 271.57 L467.26 272.18 L467.95 272.81 L468.64 273.46 L469.31 274.11 L469.98 274.78 L470.65 275.47 L470.03 276.85 L469.08 276.81 L468.13 276.76 L467.19 276.69 L466.25 276.61 L465.32 276.52 L464.40 276.41 L463.53 278.23 L464.21 278.88 L464.87 279.53 L465.52 280.21 L466.17 280.89 L466.81 281.59 L467.44 282.31 L466.77 283.66 L465.82 283.58 L464.87 283.49 L463.93 283.38 L463.00 283.26 L462.08 283.12 L461.16 282.97 L460.22 284.76 L460.86 285.43 L461.49 286.11 L462.12 286.82 L462.73 287.53 L463.34 288.26 L463.94 289.00 L463.20 290.32 L462.26 290.20 L461.32 290.06 L460.39 289.91 L459.46 289.75 L458.55 289.57 L457.64 289.38 L456.61 291.13 L457.22 291.82 L457.82 292.54 L458.42 293.27 L459.00 294.01 L459.58 294.76 L460.14 295.53 L459.35 296.82 L458.41 296.65 L457.48 296.48 L456.55 296.29 L455.64 296.08 L454.73 295.86 L453.83 295.63 L452.73 297.33 L453.31 298.05 L453.88 298.79 L454.44 299.55 L454.99 300.31 L455.53 301.09 L456.06 301.88 L455.21 303.13 L454.28 302.93 L453.36 302.71 L452.44 302.48 L451.54 302.24 L450.64 301.98 L449.75 301.71 L448.58 303.35 L449.12 304.10 L449.66 304.87 L450.19 305.65 L450.70 306.44 L451.21 307.24 L451.71 308.05 L450.80 309.26 L449.88 309.02 L448.97 308.76 L448.06 308.49 L447.17 308.20 L446.28 307.91 L445.41 307.60 L444.16 309.19 L444.67 309.96 L445.18 310.75 L445.67 311.55 L446.15 312.36 L446.62 313.19 L447.08 314.02 L446.12 315.19 L445.21 314.91 L444.31 314.61 L443.42 314.30 L442.54 313.97 L441.67 313.64 L440.81 313.29 L439.49 314.82 L439.97 315.62 L440.44 316.43 L440.89 317.25 L441.34 318.08 L441.77 318.93 L442.19 319.78 L441.19 320.91 L440.29 320.58 L439.40 320.24 L438.53 319.89 L437.66 319.53 L436.80 319.16 L435.96 318.77 L434.58 320.25 L435.02 321.06 L435.45 321.89 L435.87 322.73 L436.28 323.58 L436.67 324.45 L437.06 325.32 L436.00 326.40 L435.12 326.03 L434.25 325.66 L433.39 325.27 L432.54 324.87 L431.70 324.46 L430.88 324.03 L429.43 325.45 L429.84 326.28 L430.23 327.13 L430.61 327.99 L430.98 328.86 L431.34 329.74 L431.68 330.62 L430.58 331.66 L429.71 331.25 L428.86 330.84 L428.02 330.41 L427.19 329.97 L426.37 329.53 L425.56 329.06 L424.06 330.41 L424.42 331.27 L424.78 332.13 L425.12 333.00 L425.45 333.89 L425.77 334.78 L426.08 335.69 L424.93 336.67 L424.08 336.23 L423.25 335.77 L422.43 335.31 L421.62 334.84 L420.82 334.35 L420.03 333.86 L418.47 335.14 L418.80 336.01 L419.11 336.89 L419.42 337.77 L419.71 338.67 L419.99 339.58 L420.25 340.49 L419.06 341.43 L418.24 340.95 L417.43 340.46 L416.62 339.96 L415.83 339.45 L415.06 338.93 L414.30 338.40 L412.67 339.61 L412.97 340.49 L413.24 341.39 L413.51 342.29 L413.76 343.20 L414.00 344.11 L414.22 345.04 L412.99 345.92 L412.19 345.40 L411.40 344.88 L410.62 344.35 L409.85 343.80 L409.10 343.25 L408.36 342.69 L406.69 343.82 L406.94 344.72 L407.18 345.62 L407.41 346.53 L407.62 347.45 L407.81 348.38 L408.00 349.32 L406.73 350.14 L405.95 349.59 L405.18 349.03 L404.43 348.46 L403.69 347.89 L402.96 347.30 L402.25 346.70 L400.53 347.77 L400.74 348.67 L400.94 349.58 L401.12 350.51 L401.29 351.43 L401.45 352.37 L401.59 353.31 L400.29 354.08 L399.53 353.49 L398.79 352.90 L398.06 352.30 L397.35 351.69 L396.65 351.08 L395.96 350.45 L394.19 351.44 L394.37 352.35 L394.52 353.27 L394.67 354.20 L394.79 355.13 L394.91 356.07 L395.01 357.02 L393.67 357.73 L392.95 357.11 L392.23 356.49 L391.53 355.86 L390.84 355.22 L390.17 354.57 L389.51 353.91 L387.70 354.82 L387.84 355.74 L387.95 356.66 L388.05 357.60 L388.14 358.54 L388.21 359.48 L388.27 360.44 L386.91 361.08 L386.21 360.43 L385.52 359.78 L384.85 359.12 L384.19 358.45 L383.55 357.77 L382.92 357.09 L381.07 357.91 L381.16 358.84 L381.24 359.77 L381.30 360.70 L381.34 361.65 L381.38 362.59 L381.39 363.55 L380.00 364.13 L379.33 363.46 L378.67 362.77 L378.03 362.08 L377.40 361.38 L376.79 360.68 L376.19 359.96 L374.31 360.71 L374.36 361.64 L374.39 362.57 L374.41 363.51 L374.42 364.45 L374.41 365.40 L374.38 366.35 L372.96 366.88 L372.32 366.17 L371.70 365.46 L371.08 364.74 L370.49 364.01 L369.91 363.28 L369.34 362.54 L367.43 363.20 L367.44 364.13 L367.43 365.07 L367.41 366.00 L367.37 366.95 L367.32 367.89 L367.25 368.85 L365.81 369.31 L365.20 368.57 L364.61 367.83 L364.03 367.09 L363.47 366.33 L362.92 365.58 L362.39 364.82 L360.45 365.39 L360.41 366.32 L360.37 367.25 L360.30 368.19 L360.22 369.13 L360.13 370.07 L360.02 371.02 L358.56 371.42 L357.98 370.66 L357.42 369.89 L356.88 369.12 L356.35 368.34 L355.83 367.56 L355.34 366.78 L353.37 367.27 L353.30 368.19 L353.21 369.12 L353.11 370.06 L352.98 370.99 L352.85 371.93 L352.70 372.87 L351.22 373.20 L350.68 372.42 L350.15 371.63 L349.64 370.83 L349.15 370.04 L348.67 369.23 L348.21 368.43 L346.22 368.83 L346.11 369.75 L345.98 370.68 L345.83 371.60 L345.67 372.53 L345.49 373.46 L345.30 374.40 L343.81 374.66 L343.31 373.86 L342.82 373.04 L342.34 372.23 L341.88 371.41 L341.44 370.59 L341.01 369.76 L339.01 370.07 L338.86 370.99 L338.69 371.91 L338.50 372.83 L338.30 373.75 L338.08 374.67 L337.84 375.60 L336.34 375.80 L335.87 374.97 L335.42 374.13 L334.98 373.30 L334.56 372.46 L334.15 371.62 L333.76 370.77 L331.75 371.00 L331.56 371.91 L331.35 372.82 L331.12 373.73 L330.87 374.64 L330.61 375.55 L330.34 376.46 L328.83 376.60 L328.40 375.75 L327.99 374.89 L327.58 374.04 L327.20 373.18 L326.83 372.33 L326.48 371.47 L324.46 371.60 L324.23 372.50 L323.97 373.40 L323.71 374.30 L323.42 375.20 L323.12 376.10 L322.81 377.00 L321.30 377.06 L320.90 376.20 L320.52 375.33 L320.16 374.45 L319.81 373.58 L319.48 372.71 L319.17 371.83 L317.15 371.88 L316.87 372.77 L316.58 373.65 L316.27 374.54 L315.95 375.43 L315.61 376.31 L315.26 377.20 L313.74 377.20 L313.39 376.31 L313.05 375.43 L312.73 374.54 L312.42 373.65 L312.13 372.77 L311.85 371.88 L309.83 371.83 L309.52 372.71 L309.19 373.58 L308.84 374.45 L308.48 375.33 L308.10 376.20 L307.70 377.06 L306.19 377.00 L305.88 376.10 L305.58 375.20 L305.29 374.30 L305.03 373.40 L304.77 372.50 L304.54 371.60 L302.52 371.47 L302.17 372.33 L301.80 373.18 L301.42 374.04 L301.01 374.89 L300.60 375.75 L300.17 376.60 L298.66 376.46 L298.39 375.55 L298.13 374.64 L297.88 373.73 L297.65 372.82 L297.44 371.91 L297.25 371.00 L295.24 370.77 L294.85 371.62 L294.44 372.46 L294.02 373.30 L293.58 374.13 L293.13 374.97 L292.66 375.80 L291.16 375.60 L290.92 374.67 L290.70 373.75 L290.50 372.83 L290.31 371.91 L290.14 370.99 L289.99 370.07 L287.99 369.76 L287.56 370.59 L287.12 371.41 L286.66 372.23 L286.18 373.04 L285.69 373.86 L285.19 374.66 L283.70 374.40 L283.51 373.46 L283.33 372.53 L283.17 371.60 L283.02 370.68 L282.89 369.75 L282.78 368.83 L280.79 368.43 L280.33 369.23 L279.85 370.04 L279.36 370.83 L278.85 371.63 L278.32 372.42 L277.78 373.20 L276.30 372.87 L276.15 371.93 L276.02 370.99 L275.89 370.06 L275.79 369.12 L275.70 368.19 L275.63 367.27 L273.66 366.78 L273.17 367.56 L272.65 368.34 L272.12 369.12 L271.58 369.89 L271.02 370.66 L270.44 371.42 L268.98 371.02 L268.87 370.07 L268.78 369.13 L268.70 368.19 L268.63 367.25 L268.59 366.32 L268.55 365.39 L266.61 364.82 L266.08 365.58 L265.53 366.33 L264.97 367.09 L264.39 367.83 L263.80 368.57 L263.19 369.31 L261.75 368.85 L261.68 367.89 L261.63 366.95 L261.59 366.00 L261.57 365.07 L261.56 364.13 L261.57 363.20 L259.66 362.54 L259.09 363.28 L258.51 364.01 L257.92 364.74 L257.30 365.46 L256.68 366.17 L256.04 366.88 L254.62 366.35 L254.59 365.40 L254.58 364.45 L254.59 363.51 L254.61 362.57 L254.64 361.64 L254.69 360.71 L252.81 359.96 L252.21 360.68 L251.60 361.38 L250.97 362.08 L250.33 362.77 L249.67 363.46 L249.00 364.13 L247.61 363.55 L247.62 362.59 L247.66 361.65 L247.70 360.70 L247.76 359.77 L247.84 358.84 L247.93 357.91 L246.08 357.09 L245.45 357.77 L244.81 358.45 L244.15 359.12 L243.48 359.78 L242.79 360.43 L242.09 361.08 L240.73 360.44 L240.79 359.48 L240.86 358.54 L240.95 357.60 L241.05 356.66 L241.16 355.74 L241.30 354.82 L239.49 353.91 L238.83 354.57 L238.16 355.22 L237.47 355.86 L236.77 356.49 L236.05 357.11 L235.33 357.73 L233.99 357.02 L234.09 356.07 L234.21 355.13 L234.33 354.20 L234.48 353.27 L234.63 352.35 L234.81 351.44 L233.04 350.45 L232.35 351.08 L231.65 351.69 L230.94 352.30 L230.21 352.90 L229.47 353.49 L228.71 354.08 L227.41 353.31 L227.55 352.37 L227.71 351.43 L227.88 350.51 L228.06 349.58 L228.26 348.67 L228.47 347.77 L226.75 346.70 L226.04 347.30 L225.31 347.89 L224.57 348.46 L223.82 349.03 L223.05 349.59 L222.27 350.14 L221.00 349.32 L221.19 348.38 L221.38 347.45 L221.59 346.53 L221.82 345.62 L222.06 344.72 L222.31 343.82 L220.64 342.69 L219.90 343.25 L219.15 343.80 L218.38 344.35 L217.60 344.88 L216.81 345.40 L216.01 345.92 L214.78 345.04 L215.00 344.11 L215.24 343.20 L215.49 342.29 L215.76 341.39 L216.03 340.49 L216.33 339.61 L214.70 338.40 L213.94 338.93 L213.17 339.45 L212.38 339.96 L211.57 340.46 L210.76 340.95 L209.94 341.43 L208.75 340.49 L209.01 339.58 L209.29 338.67 L209.58 337.77 L209.89 336.89 L210.20 336.01 L210.53 335.14 L208.97 333.86 L208.18 334.35 L207.38 334.84 L206.57 335.31 L205.75 335.77 L204.92 336.23 L204.07 336.67 L202.92 335.69 L203.23 334.78 L203.55 333.89 L203.88 333.00 L204.22 332.13 L204.58 331.27 L204.94 330.41 L203.44 329.06 L202.63 329.53 L201.81 329.97 L200.98 330.41 L200.14 330.84 L199.29 331.25 L198.42 331.66 L197.32 330.62 L197.66 329.74 L198.02 328.86 L198.39 327.99 L198.77 327.13 L199.16 326.28 L199.57 325.45 L198.12 324.03 L197.30 324.46 L196.46 324.87 L195.61 325.27 L194.75 325.66 L193.88 326.03 L193.00 326.40 L191.94 325.32 L192.33 324.45 L192.72 323.58 L193.13 322.73 L193.55 321.89 L193.98 321.06 L194.42 320.25 L193.04 318.77 L192.20 319.16 L191.34 319.53 L190.47 319.89 L189.60 320.24 L188.71 320.58 L187.81 320.91 L186.81 319.78 L187.23 318.93 L187.66 318.08 L188.11 317.25 L188.56 316.43 L189.03 315.62 L189.51 314.82 L188.19 313.29 L187.33 313.64 L186.46 313.97 L185.58 314.30 L184.69 314.61 L183.79 314.91 L182.88 315.19 L181.92 314.02 L182.38 313.19 L182.85 312.36 L183.33 311.55 L183.82 310.75 L184.33 309.96 L184.84 309.19 L183.59 307.60 L182.72 307.91 L181.83 308.20 L180.94 308.49 L180.03 308.76 L179.12 309.02 L178.20 309.26 L177.29 308.05 L177.79 307.24 L178.30 306.44 L178.81 305.65 L179.34 304.87 L179.88 304.10 L180.42 303.35 L179.25 301.71 L178.36 301.98 L177.46 302.24 L176.56 302.48 L175.64 302.71 L174.72 302.93 L173.79 303.13 L172.94 301.88 L173.47 301.09 L174.01 300.31 L174.56 299.55 L175.12 298.79 L175.69 298.05 L176.27 297.33 L175.17 295.63 L174.27 295.86 L173.36 296.08 L172.45 296.29 L171.52 296.48 L170.59 296.65 L169.65 296.82 L168.86 295.53 L169.42 294.76 L170.00 294.01 L170.58 293.27 L171.18 292.54 L171.78 291.82 L172.39 291.13 L171.36 289.38 L170.45 289.57 L169.54 289.75 L168.61 289.91 L167.68 290.06 L166.74 290.20 L165.80 290.32 L165.06 289.00 L165.66 288.26 L166.27 287.53 L166.88 286.82 L167.51 286.11 L168.14 285.43 L168.78 284.76 L167.84 282.97 L166.92 283.12 L166.00 283.26 L165.07 283.38 L164.13 283.49 L163.18 283.58 L162.23 283.66 L161.56 282.31 L162.19 281.59 L162.83 280.89 L163.48 280.21 L164.13 279.53 L164.79 278.88 L165.47 278.23 L164.60 276.41 L163.68 276.52 L162.75 276.61 L161.81 276.69 L160.87 276.76 L159.92 276.81 L158.97 276.85 L158.35 275.47 L159.02 274.78 L159.69 274.11 L160.36 273.46 L161.05 272.81 L161.74 272.18 L162.44 271.57 L161.65 269.71 L160.73 269.78 L159.79 269.83 L158.86 269.87 L157.91 269.90 L156.96 269.91 L156.01 269.90 L155.46 268.49 L156.15 267.84 L156.85 267.20 L157.55 266.57 L158.27 265.96 L158.98 265.36 L159.71 264.78 L159.01 262.88 L158.08 262.91 L157.14 262.93 L156.21 262.92 L155.26 262.91 L154.31 262.88 L153.36 262.83 L152.87 261.40 L153.59 260.78 L154.32 260.17 L155.05 259.57 L155.79 258.99 L156.53 258.43 L157.28 257.88 L156.67 255.95 L155.74 255.94 L154.80 255.91 L153.86 255.87 L152.92 255.81 L151.98 255.73 L151.03 255.65 L150.60 254.20 L151.35 253.60 L152.10 253.03 L152.86 252.47 L153.62 251.92 L154.39 251.39 L155.16 250.87 L154.63 248.92 L153.70 248.87 L152.77 248.80 L151.84 248.71 L150.90 248.61 L149.96 248.50 L149.01 248.37 L148.65 246.90 L149.42 246.34 L150.20 245.80 L150.98 245.27 L151.77 244.76 L152.56 244.26 L153.36 243.78 L152.91 241.81 L151.99 241.71 L151.06 241.60 L150.13 241.48 L149.20 241.34 L148.26 241.18 L147.32 241.01 L147.02 239.52 L147.82 239.00 L148.62 238.49 L149.43 238.00 L150.24 237.52 L151.05 237.06 L151.87 236.62 L151.51 234.63 L150.59 234.49 L149.67 234.34 L148.74 234.17 L147.82 233.99 L146.89 233.79 L145.96 233.58 L145.73 232.08 L146.55 231.60 L147.37 231.12 L148.20 230.67 L149.03 230.23 L149.86 229.80 L150.69 229.39 L150.42 227.39 L149.51 227.21 L148.60 227.02 L147.68 226.81 L146.77 226.59 L145.85 226.35 L144.93 226.10 L144.76 224.59 L145.60 224.14 L146.45 223.71 L147.29 223.29 L148.14 222.88 L148.99 222.50 L149.84 222.13 L149.66 220.11 L148.76 219.90 L147.85 219.66 L146.95 219.42 L146.04 219.15 L145.13 218.87 L144.23 218.58 L144.13 217.07 L144.99 216.65 L145.85 216.26 L146.71 215.87 L147.58 215.51 L148.44 215.16 L149.31 214.83 L149.22 212.81 L148.33 212.55 L147.43 212.28 L146.54 211.99 L145.65 211.69 L144.75 211.37 L143.86 211.03 L143.83 209.52 L144.70 209.15 L145.58 208.79 L146.46 208.44 L147.34 208.12 L148.22 207.81 L149.10 207.51Z"/>
 <path fill="#c6d0dc" fill-rule="evenodd" stroke="#000" stroke-width="1" d="M245.72 203.79 L246.62 203.92 L247.51 204.12 L248.41 204.39 L249.30 204.70 L250.20 205.07 L251.09 205.48 L251.09 207.52 L250.20 207.93 L249.30 208.30 L248.41 208.61 L247.51 208.88 L246.62 209.08 L245.72 209.21 L245.60 210.84 L246.47 211.10 L247.32 211.43 L248.17 211.82 L249.01 212.26 L249.84 212.76 L250.67 213.29 L250.37 215.31 L249.43 215.59 L248.49 215.82 L247.56 216.00 L246.63 216.13 L245.72 216.21 L244.81 216.21 L244.46 217.79 L245.28 218.18 L246.07 218.63 L246.86 219.14 L247.62 219.70 L248.38 220.31 L249.11 220.96 L248.52 222.92 L247.55 223.05 L246.59 223.14 L245.64 223.19 L244.70 223.19 L243.79 223.12 L242.90 222.99 L242.32 224.51 L243.07 225.01 L243.79 225.57 L244.49 226.19 L245.17 226.86 L245.82 227.57 L246.46 228.32 L245.59 230.17 L244.61 230.16 L243.64 230.11 L242.70 230.02 L241.77 229.88 L240.88 229.69 L240.01 229.43 L239.22 230.85 L239.89 231.45 L240.52 232.11 L241.12 232.83 L241.69 233.58 L242.24 234.38 L242.76 235.22 L241.63 236.92 L240.66 236.77 L239.71 236.58 L238.79 236.35 L237.90 236.08 L237.04 235.75 L236.22 235.37 L235.23 236.66 L235.80 237.35 L236.33 238.10 L236.82 238.90 L237.28 239.73 L237.70 240.60 L238.09 241.50 L236.73 243.02 L235.79 242.73 L234.88 242.41 L234.00 242.05 L233.16 241.64 L232.36 241.20 L231.60 240.70 L230.43 241.83 L230.90 242.60 L231.32 243.42 L231.69 244.28 L232.02 245.17 L232.31 246.09 L232.56 247.04 L231.00 248.34 L230.11 247.92 L229.26 247.47 L228.44 246.98 L227.66 246.46 L226.93 245.90 L226.26 245.30 L224.94 246.25 L225.29 247.08 L225.58 247.95 L225.82 248.85 L226.02 249.78 L226.17 250.74 L226.29 251.71 L224.55 252.78 L223.73 252.23 L222.95 251.65 L222.21 251.05 L221.52 250.43 L220.88 249.77 L220.31 249.08 L218.86 249.82 L219.09 250.69 L219.25 251.60 L219.36 252.52 L219.41 253.47 L219.43 254.44 L219.40 255.42 L217.52 256.22 L216.79 255.56 L216.11 254.88 L215.46 254.18 L214.87 253.46 L214.33 252.71 L213.86 251.94 L212.32 252.47 L212.42 253.37 L212.45 254.28 L212.42 255.22 L212.34 256.16 L212.21 257.12 L212.04 258.09 L210.07 258.61 L209.44 257.85 L208.86 257.07 L208.33 256.29 L207.85 255.49 L207.42 254.67 L207.07 253.84 L205.47 254.14 L205.44 255.04 L205.33 255.95 L205.17 256.87 L204.95 257.79 L204.69 258.72 L204.37 259.66 L202.35 259.88 L201.84 259.04 L201.38 258.19 L200.97 257.33 L200.61 256.47 L200.30 255.60 L200.08 254.73 L198.45 254.79 L198.29 255.68 L198.05 256.56 L197.75 257.45 L197.40 258.33 L197.01 259.21 L196.56 260.09 L194.52 260.02 L194.15 259.11 L193.81 258.20 L193.53 257.29 L193.30 256.39 L193.13 255.49 L193.03 254.59 L191.41 254.41 L191.12 255.27 L190.76 256.11 L190.33 256.94 L189.86 257.77 L189.34 258.58 L188.77 259.38 L186.76 259.01 L186.52 258.06 L186.32 257.11 L186.17 256.18 L186.08 255.25 L186.04 254.33 L186.07 253.43 L184.50 253.02 L184.09 253.82 L183.60 254.60 L183.06 255.36 L182.47 256.11 L181.84 256.84 L181.16 257.55 L179.23 256.89 L179.13 255.91 L179.07 254.95 L179.06 254.00 L179.10 253.06 L179.20 252.15 L179.36 251.26 L177.86 250.63 L177.34 251.36 L176.75 252.06 L176.10 252.74 L175.41 253.39 L174.68 254.02 L173.90 254.63 L172.09 253.69 L172.13 252.71 L172.22 251.75 L172.34 250.81 L172.52 249.89 L172.75 249.00 L173.04 248.15 L171.65 247.30 L171.02 247.95 L170.34 248.56 L169.60 249.13 L168.82 249.68 L168.00 250.19 L167.15 250.68 L165.49 249.49 L165.67 248.53 L165.90 247.58 L166.16 246.67 L166.47 245.79 L166.82 244.94 L167.23 244.14 L165.98 243.10 L165.27 243.65 L164.50 244.15 L163.69 244.61 L162.84 245.04 L161.95 245.43 L161.04 245.79 L159.57 244.37 L159.89 243.44 L160.25 242.55 L160.65 241.68 L161.08 240.85 L161.55 240.07 L162.08 239.33 L160.99 238.12 L160.20 238.56 L159.37 238.95 L158.50 239.29 L157.60 239.58 L156.66 239.84 L155.71 240.06 L154.46 238.45 L154.92 237.57 L155.40 236.74 L155.92 235.94 L156.46 235.18 L157.05 234.47 L157.67 233.83 L156.77 232.47 L155.93 232.79 L155.05 233.05 L154.14 233.26 L153.21 233.42 L152.25 233.54 L151.27 233.62 L150.27 231.84 L150.85 231.04 L151.45 230.29 L152.07 229.57 L152.72 228.90 L153.40 228.29 L154.12 227.74 L153.43 226.26 L152.55 226.46 L151.64 226.59 L150.71 226.66 L149.76 226.68 L148.79 226.66 L147.81 226.60 L147.08 224.69 L147.77 223.99 L148.47 223.33 L149.20 222.71 L149.94 222.14 L150.70 221.63 L151.49 221.19 L151.02 219.63 L150.12 219.70 L149.20 219.70 L148.27 219.63 L147.33 219.52 L146.37 219.35 L145.41 219.15 L144.97 217.16 L145.75 216.56 L146.55 216.01 L147.35 215.51 L148.17 215.05 L149.00 214.66 L149.84 214.34 L149.60 212.73 L148.70 212.66 L147.80 212.52 L146.88 212.32 L145.97 212.07 L145.05 211.77 L144.13 211.43 L143.98 209.39 L144.84 208.92 L145.70 208.49 L146.58 208.11 L147.45 207.78 L148.33 207.51 L149.21 207.31 L149.21 205.69 L148.33 205.49 L147.45 205.22 L146.58 204.89 L145.70 204.51 L144.84 204.08 L143.98 203.61 L144.13 201.57 L145.05 201.23 L145.97 200.93 L146.88 200.68 L147.80 200.48 L148.70 200.34 L149.60 200.27 L149.84 198.66 L149.00 198.34 L148.17 197.95 L147.35 197.49 L146.55 196.99 L145.75 196.44 L144.97 195.84 L145.41 193.85 L146.37 193.65 L147.33 193.48 L148.27 193.37 L149.20 193.30 L150.12 193.30 L151.02 193.37 L151.49 191.81 L150.70 191.37 L149.94 190.86 L149.20 190.29 L148.47 189.67 L147.77 189.01 L147.08 188.31 L147.81 186.40 L148.79 186.34 L149.76 186.32 L150.71 186.34 L151.64 186.41 L152.55 186.54 L153.43 186.74 L154.12 185.26 L153.40 184.71 L152.72 184.10 L152.07 183.43 L151.45 182.71 L150.85 181.96 L150.27 181.16 L151.27 179.38 L152.25 179.46 L153.21 179.58 L154.14 179.74 L155.05 179.95 L155.93 180.21 L156.77 180.53 L157.67 179.17 L157.05 178.53 L156.46 177.82 L155.92 177.06 L155.40 176.26 L154.92 175.43 L154.46 174.55 L155.71 172.94 L156.66 173.16 L157.60 173.42 L158.50 173.71 L159.37 174.05 L160.20 174.44 L160.99 174.88 L162.08 173.67 L161.55 172.93 L161.08 172.15 L160.65 171.32 L160.25 170.45 L159.89 169.56 L159.57 168.63 L161.04 167.21 L161.95 167.57 L162.84 167.96 L163.69 168.39 L164.50 168.85 L165.27 169.35 L165.98 169.90 L167.23 168.86 L166.82 168.06 L166.47 167.21 L166.16 166.33 L165.90 165.42 L165.67 164.47 L165.49 163.51 L167.15 162.32 L168.00 162.81 L168.82 163.32 L169.60 163.87 L170.34 164.44 L171.02 165.05 L171.65 165.70 L173.04 164.85 L172.75 164.00 L172.52 163.11 L172.34 162.19 L172.22 161.25 L172.13 160.29 L172.09 159.31 L173.90 158.37 L174.68 158.98 L175.41 159.61 L176.10 160.26 L176.75 160.94 L177.34 161.64 L177.86 162.37 L179.36 161.74 L179.20 160.85 L179.10 159.94 L179.06 159.00 L179.07 158.05 L179.13 157.09 L179.23 156.11 L181.16 155.45 L181.84 156.16 L182.47 156.89 L183.06 157.64 L183.60 158.40 L184.09 159.18 L184.50 159.98 L186.07 159.57 L186.04 158.67 L186.08 157.75 L186.17 156.82 L186.32 155.89 L186.52 154.94 L186.76 153.99 L188.77 153.62 L189.34 154.42 L189.86 155.23 L190.33 156.06 L190.76 156.89 L191.12 157.73 L191.41 158.59 L193.03 158.41 L193.13 157.51 L193.30 156.61 L193.53 155.71 L193.81 154.80 L194.15 153.89 L194.52 152.98 L196.56 152.91 L197.01 153.79 L197.40 154.67 L197.75 155.55 L198.05 156.44 L198.29 157.32 L198.45 158.21 L200.08 158.27 L200.30 157.40 L200.61 156.53 L200.97 155.67 L201.38 154.81 L201.84 153.96 L202.35 153.12 L204.37 153.34 L204.69 154.28 L204.95 155.21 L205.17 156.13 L205.33 157.05 L205.44 157.96 L205.47 158.86 L207.07 159.16 L207.42 158.33 L207.85 157.51 L208.33 156.71 L208.86 155.93 L209.44 155.15 L210.07 154.39 L212.04 154.91 L212.21 155.88 L212.34 156.84 L212.42 157.78 L212.45 158.72 L212.42 159.63 L212.32 160.53 L213.86 161.06 L214.33 160.29 L214.87 159.54 L215.46 158.82 L216.11 158.12 L216.79 157.44 L217.52 156.78 L219.40 157.58 L219.43 158.56 L219.41 159.53 L219.36 160.48 L219.25 161.40 L219.09 162.31 L218.86 163.18 L220.31 163.92 L220.88 163.23 L221.52 162.57 L222.21 161.95 L222.95 161.35 L223.73 160.77 L224.55 160.22 L226.29 161.29 L226.17 162.26 L226.02 163.22 L225.82 164.15 L225.58 165.05 L225.29 165.92 L224.94 166.75 L226.26 167.70 L226.93 167.10 L227.66 166.54 L228.44 166.02 L229.26 165.53 L230.11 165.08 L231.00 164.66 L232.56 165.96 L232.31 166.91 L232.02 167.83 L231.69 168.72 L231.32 169.58 L230.90 170.40 L230.43 171.17 L231.60 172.30 L232.36 171.80 L233.16 171.36 L234.00 170.95 L234.88 170.59 L235.79 170.27 L236.73 169.98 L238.09 171.50 L237.70 172.40 L237.28 173.27 L236.82 174.10 L236.33 174.90 L235.80 175.65 L235.23 176.34 L236.22 177.63 L237.04 177.25 L237.90 176.92 L238.79 176.65 L239.71 176.42 L240.66 176.23 L241.63 176.08 L242.76 177.78 L242.24 178.62 L241.69 179.42 L241.12 180.17 L240.52 180.89 L239.89 181.55 L239.22 182.15 L240.01 183.57 L240.88 183.31 L241.77 183.12 L242.70 182.98 L243.64 182.89 L244.61 182.84 L245.59 182.83 L246.46 184.68 L245.82 185.43 L245.17 186.14 L244.49 186.81 L243.79 187.43 L243.07 187.99 L242.32 188.49 L242.90 190.01 L243.79 189.88 L244.70 189.81 L245.64 189.81 L246.59 189.86 L247.55 189.95 L248.52 190.08 L249.11 192.04 L248.38 192.69 L247.62 193.30 L246.86 193.86 L246.07 194.37 L245.28 194.82 L244.46 195.21 L244.81 196.79 L245.72 196.79 L246.63 196.87 L247.56 197.00 L248.49 197.18 L249.43 197.41 L250.37 197.69 L250.67 199.71 L249.84 200.24 L249.01 200.74 L248.17 201.18 L247.32 201.57 L246.47 201.90 L245.60 202.16Z M227.500 206.500A30 30 0 1 0 167.500 206.500A30 30 0 1 0 227.500 206.500Z"/>
 <path d="M187 206.500H208M197.500 196V217M304 206.500H325M314.500 196V217" stroke="#000" stroke-width="1" fill="none"/>
</svg>
<!-- LOWER CONTROLS -->
<div class="lbl" style="left:197px;top:561px;width:149px;text-align:center">Drehwinkel [°]</div>
<div class="btn tan2" style="left:197px;top:577px;width:48px"><svg class="abs" style="left:7px;top:0" width="32" height="24" viewBox="0 0 32 24"><path d="M13 11L16.200 6.800H20L21.200 8V13L18.700 15.500" fill="none" stroke="#2f6da6" stroke-width="3.400" stroke-linejoin="round" stroke-linecap="round"/><path d="M9.100 7.200V13.800H15.700Z" fill="#76b8ee" stroke="#2f6da6" stroke-width=".9" stroke-linejoin="round"/><path d="M12 12L16.200 6.800H20L21.200 8V13L18.700 15.500" fill="none" stroke="#7fc0f2" stroke-width="1.900" stroke-linejoin="round" stroke-linecap="round"/></svg></div>
<div class="inp" style="left:249px;top:577px;width:47px;height:25px;line-height:25px;padding-left:2px">4.0</div>
<div class="btn tan2" style="left:299px;top:577px;width:48px"><svg class="abs" style="left:7px;top:0" width="32" height="24" viewBox="0 0 32 24"><g transform="translate(32 0) scale(-1 1)"><path d="M13 11L16.200 6.800H20L21.200 8V13L18.700 15.500" fill="none" stroke="#2f6da6" stroke-width="3.400" stroke-linejoin="round" stroke-linecap="round"/><path d="M9.100 7.200V13.800H15.700Z" fill="#76b8ee" stroke="#2f6da6" stroke-width=".9" stroke-linejoin="round"/><path d="M12 12L16.200 6.800H20L21.200 8V13L18.700 15.500" fill="none" stroke="#7fc0f2" stroke-width="1.900" stroke-linejoin="round" stroke-linecap="round"/></g></svg></div>
<div class="lbl" style="left:197px;top:616px;width:149px;text-align:center">Rotation</div>
<div class="btn tan2" style="left:197px;top:632px;width:48px"><svg class="abs" style="left:7px;top:0" width="32" height="24" viewBox="0 0 32 24"><path d="M13 11L16.200 6.800H20L21.200 8V13L18.700 15.500" fill="none" stroke="#2f6da6" stroke-width="3.400" stroke-linejoin="round" stroke-linecap="round"/><path d="M9.100 7.200V13.800H15.700Z" fill="#76b8ee" stroke="#2f6da6" stroke-width=".9" stroke-linejoin="round"/><path d="M12 12L16.200 6.800H20L21.200 8V13L18.700 15.500" fill="none" stroke="#7fc0f2" stroke-width="1.900" stroke-linejoin="round" stroke-linecap="round"/></svg></div>
<div class="btn" style="left:248px;top:632px;width:48px;height:25px;background:linear-gradient(#ccd4dd,#b8c1cc);border-color:#c4ccd5;box-shadow:inset -1px -1px 0 #a2abb5,inset 1px 1px 0 #d6dde4"><span class="lb" style="left:0;right:0;text-align:center;color:#7d858d">Stopp</span></div>
<div class="btn tan2" style="left:299px;top:632px;width:48px"><svg class="abs" style="left:7px;top:0" width="32" height="24" viewBox="0 0 32 24"><g transform="translate(32 0) scale(-1 1)"><path d="M13 11L16.200 6.800H20L21.200 8V13L18.700 15.500" fill="none" stroke="#2f6da6" stroke-width="3.400" stroke-linejoin="round" stroke-linecap="round"/><path d="M9.100 7.200V13.800H15.700Z" fill="#76b8ee" stroke="#2f6da6" stroke-width=".9" stroke-linejoin="round"/><path d="M12 12L16.200 6.800H20L21.200 8V13L18.700 15.500" fill="none" stroke="#7fc0f2" stroke-width="1.900" stroke-linejoin="round" stroke-linecap="round"/></g></svg></div>
<div class="lbl" style="left:410px;top:561px">Zahndickenabmaß [µm]</div>
<div class="lbl" style="left:558px;top:561px">Kopfkreisabmaß [µm]</div>
<div class="lbl" style="left:367px;top:581px">Rad 1</div>
<div class="lbl" style="left:367px;top:606px">Rad 2</div>
<div class="lbl" style="left:372px;top:640px">Achsabstandsabmaß A<span style="font-size:10px;position:relative;top:4px">a</span> [µm]</div>

<div class="sp" style="left:412px;top:577px"><svg width="17" height="17" viewBox="0 0 17 17"><path d="M12.700 4.600L5.300 9.400L12.700 14.600" fill="none" stroke="#a0a0a0" stroke-width="2.500"/><path d="M13 5L5.900 9.500L13 14.400" fill="none" stroke="#f3efeb" stroke-width="1"/></svg></div>
<div class="sp" style="left:432px;top:577px"><svg width="17" height="17" viewBox="0 0 17 17"><path d="M7 10.600H16" stroke="#fbf9f7" stroke-width="1.500"/><path d="M5.200 8.900H15.700" stroke="#9b9b9b" stroke-width="1.500"/></svg></div>
<div class="sp" style="left:452px;top:577px"><svg width="17" height="17" viewBox="0 0 17 17"><path d="M5 4.600L12.400 9.400L5 14.600" fill="none" stroke="#a0a0a0" stroke-width="2.500"/><path d="M5.300 5L12.400 9.500L5.300 14.400" fill="none" stroke="#f3efeb" stroke-width="1"/></svg></div>
<div class="abs" style="left:412px;top:596px;width:60px;height:1px;background:#bfae9f"></div>
<div class="sp" style="left:412px;top:602px"><svg width="17" height="17" viewBox="0 0 17 17"><path d="M12.700 4.600L5.300 9.400L12.700 14.600" fill="none" stroke="#a0a0a0" stroke-width="2.500"/><path d="M13 5L5.900 9.500L13 14.400" fill="none" stroke="#f3efeb" stroke-width="1"/></svg></div>
<div class="sp" style="left:432px;top:602px"><svg width="17" height="17" viewBox="0 0 17 17"><path d="M7 10.600H16" stroke="#fbf9f7" stroke-width="1.500"/><path d="M5.200 8.900H15.700" stroke="#9b9b9b" stroke-width="1.500"/></svg></div>
<div class="sp" style="left:452px;top:602px"><svg width="17" height="17" viewBox="0 0 17 17"><path d="M5 4.600L12.400 9.400L5 14.600" fill="none" stroke="#a0a0a0" stroke-width="2.500"/><path d="M5.300 5L12.400 9.500L5.300 14.400" fill="none" stroke="#f3efeb" stroke-width="1"/></svg></div>
<div class="abs" style="left:412px;top:621px;width:60px;height:1px;background:#bfae9f"></div>
<div class="sp" style="left:557px;top:577px"><svg width="17" height="17" viewBox="0 0 17 17"><path d="M12.700 4.600L5.300 9.400L12.700 14.600" fill="none" stroke="#a0a0a0" stroke-width="2.500"/><path d="M13 5L5.900 9.500L13 14.400" fill="none" stroke="#f3efeb" stroke-width="1"/></svg></div>
<div class="sp" style="left:577px;top:577px"><svg width="17" height="17" viewBox="0 0 17 17"><path d="M7 10.600H16" stroke="#fbf9f7" stroke-width="1.500"/><path d="M5.200 8.900H15.700" stroke="#9b9b9b" stroke-width="1.500"/></svg></div>
<div class="sp" style="left:597px;top:577px"><svg width="17" height="17" viewBox="0 0 17 17"><path d="M5 4.600L12.400 9.400L5 14.600" fill="none" stroke="#a0a0a0" stroke-width="2.500"/><path d="M5.300 5L12.400 9.500L5.300 14.400" fill="none" stroke="#f3efeb" stroke-width="1"/></svg></div>
<div class="abs" style="left:557px;top:596px;width:60px;height:1px;background:#bfae9f"></div>
<div class="sp" style="left:557px;top:602px"><svg width="17" height="17" viewBox="0 0 17 17"><path d="M12.700 4.600L5.300 9.400L12.700 14.600" fill="none" stroke="#a0a0a0" stroke-width="2.500"/><path d="M13 5L5.900 9.500L13 14.400" fill="none" stroke="#f3efeb" stroke-width="1"/></svg></div>
<div class="sp" style="left:577px;top:602px"><svg width="17" height="17" viewBox="0 0 17 17"><path d="M7 10.600H16" stroke="#fbf9f7" stroke-width="1.500"/><path d="M5.200 8.900H15.700" stroke="#9b9b9b" stroke-width="1.500"/></svg></div>
<div class="sp" style="left:597px;top:602px"><svg width="17" height="17" viewBox="0 0 17 17"><path d="M5 4.600L12.400 9.400L5 14.600" fill="none" stroke="#a0a0a0" stroke-width="2.500"/><path d="M5.300 5L12.400 9.500L5.300 14.400" fill="none" stroke="#f3efeb" stroke-width="1"/></svg></div>
<div class="abs" style="left:557px;top:621px;width:60px;height:1px;background:#bfae9f"></div>
<div class="sp" style="left:557px;top:637px"><svg width="17" height="17" viewBox="0 0 17 17"><path d="M12.700 4.600L5.300 9.400L12.700 14.600" fill="none" stroke="#a0a0a0" stroke-width="2.500"/><path d="M13 5L5.900 9.500L13 14.400" fill="none" stroke="#f3efeb" stroke-width="1"/></svg></div>
<div class="sp" style="left:577px;top:637px"><svg width="17" height="17" viewBox="0 0 17 17"><path d="M7 10.600H16" stroke="#fbf9f7" stroke-width="1.500"/><path d="M5.200 8.900H15.700" stroke="#9b9b9b" stroke-width="1.500"/></svg></div>
<div class="sp" style="left:597px;top:637px"><svg width="17" height="17" viewBox="0 0 17 17"><path d="M5 4.600L12.400 9.400L5 14.600" fill="none" stroke="#a0a0a0" stroke-width="2.500"/><path d="M5.300 5L12.400 9.500L5.300 14.400" fill="none" stroke="#f3efeb" stroke-width="1"/></svg></div>
<div class="abs" style="left:557px;top:656px;width:60px;height:1px;background:#bfae9f"></div>
<div class="inp" style="left:482px;top:577px;width:50px">-120.0</div>
<div class="inp" style="left:482px;top:602px;width:50px">-215.0</div>
<div class="inp" style="left:622px;top:577px;width:50px;color:#8a8a8a">0.0</div>
<div class="inp" style="left:622px;top:602px;width:50px;color:#8a8a8a">0.0</div>
<div class="inp" style="left:622px;top:636px;width:50px;color:#8a8a8a">0.0</div>
<div class="lbl" style="left:712px;top:563px">Darstellung der Zahnform</div>
<div class="cb" style="left:716px;top:586px"></div><div class="lbl g" style="left:733px;top:586px">mit Bearbeitungszugabe</div>
<div class="cb" style="left:716px;top:611px"></div><div class="lbl g" style="left:733px;top:611px">mit Bearbeitungszugabe</div>

<div id="frame"></div>
</div>
</body>
</html>
